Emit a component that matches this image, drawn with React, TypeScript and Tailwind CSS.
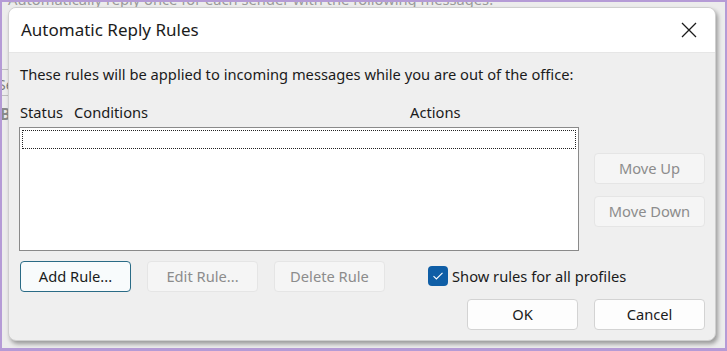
import React from "react";

const font = { fontFamily: '"Noto Sans", "Open Sans", "Liberation Sans", sans-serif' };

function Btn({ label, disabled, primary, className = "" }: { label: string; disabled?: boolean; primary?: boolean; className?: string }) {
  const base = "flex items-center justify-center w-[111px] h-[31px] rounded-[4px] text-[14.7px] leading-none";
  let look = "bg-[#fdfdfd] border border-[#d3d3d3] text-[#1b1b1b]";
  if (disabled) look = "bg-[#f5f5f5] border border-[#e5e5e5] text-[#8c8c8c]";
  if (primary) look = "bg-[#f8fbfc] border border-[#2a6b86] text-[#1b1b1b]";
  return <div className={`${base} ${look} ${className}`}>{label}</div>;
}

export default function App() {
  return (
    <div style={font} className="relative w-[727px] h-[351px] overflow-hidden bg-[#b59bd6]">
      <div className="absolute left-[2px] top-[2px] right-[2px] bottom-[3px] bg-[#ececec] overflow-hidden">
        <div className="absolute left-[6px] top-[-14px] whitespace-nowrap text-[14.7px] text-[#9a9a9a]">
          Automatically reply once for each sender with the following messages:
        </div>
        <div className="absolute left-[-4px] top-[72px] text-[14px] text-[#7d7d7d]">Se</div>
        <div className="absolute left-[-2px] top-[100px] text-[16px] font-bold text-[#8a8a8a]">B</div>
        <div className="absolute left-[0px] top-[67px] w-[6px] h-[1px] bg-[#bdbdbd]" />
        <div className="absolute left-[0px] top-[93px] w-[6px] h-[1px] bg-[#bdbdbd]" />
      </div>
      <div className="absolute left-[8px] top-[7px] w-[708px] h-[334px] rounded-[8px] bg-[#efefef] overflow-hidden shadow-[2px_3px_4px_rgba(0,0,0,0.35)] border border-[#cfcfcf]">
        <div className="h-[45px] bg-white flex items-center justify-between pl-[12px] pr-[16px] border-b border-[#e6e6e6]">
          <span className="text-[17px] text-[#1b1b1b]">Automatic Reply Rules</span>
          <svg width="16" height="16" viewBox="0 0 16 16" className="mr-[2px]">
            <path d="M1 1 L15 15 M15 1 L1 15" stroke="#1b1b1b" strokeWidth="1.3" />
          </svg>
        </div>
        <div className="pl-[10px] pr-[10px]">
          <div className="mt-[11px] pl-[1px] text-[14.7px] leading-[20px] text-[#1b1b1b]">
            These rules will be applied to incoming messages while you are out of the office:
          </div>
          <div className="mt-[18px] flex text-[14.7px] leading-[20px] text-[#1b1b1b]">
            <span className="w-[55px] pl-[1px]">Status</span>
            <span className="w-[336px]">Conditions</span>
            <span>Actions</span>
          </div>
          <div className="mt-[5px] flex">
            <div className="w-[562px] h-[124px] bg-white border border-[#8a8a8a] p-[2px]">
              <div className="h-[19px] border border-dotted border-[#222]" />
            </div>
            <div className="ml-[15px] pt-[26px] flex flex-col gap-[12px]">
              <Btn label="Move Up" disabled />
              <Btn label="Move Down" disabled />
            </div>
          </div>
          <div className="mt-[10px] flex items-center">
            <Btn label="Add Rule..." primary className="ml-[1px]" />
            <Btn label="Edit Rule..." disabled className="ml-[16px]" />
            <Btn label="Delete Rule" disabled className="ml-[16px]" />
            <div className="ml-[43px] flex items-center">
              <div className="w-[20px] h-[20px] rounded-[4px] bg-[#0f5ea6] flex items-center justify-center">
                <svg width="12" height="10" viewBox="0 0 12 10">
                  <path d="M1.5 5.2 L4.4 8 L10.5 1.8" stroke="white" strokeWidth="1.1" fill="none" />
                </svg>
              </div>
              <span className="ml-[4px] text-[14.7px] text-[#1b1b1b]">Show rules for all profiles</span>
            </div>
          </div>
          <div className="mt-[7px] flex justify-end gap-[16px]">
            <Btn label="OK" />
            <Btn label="Cancel" />
          </div>
        </div>
      </div>
    </div>
  );
}
